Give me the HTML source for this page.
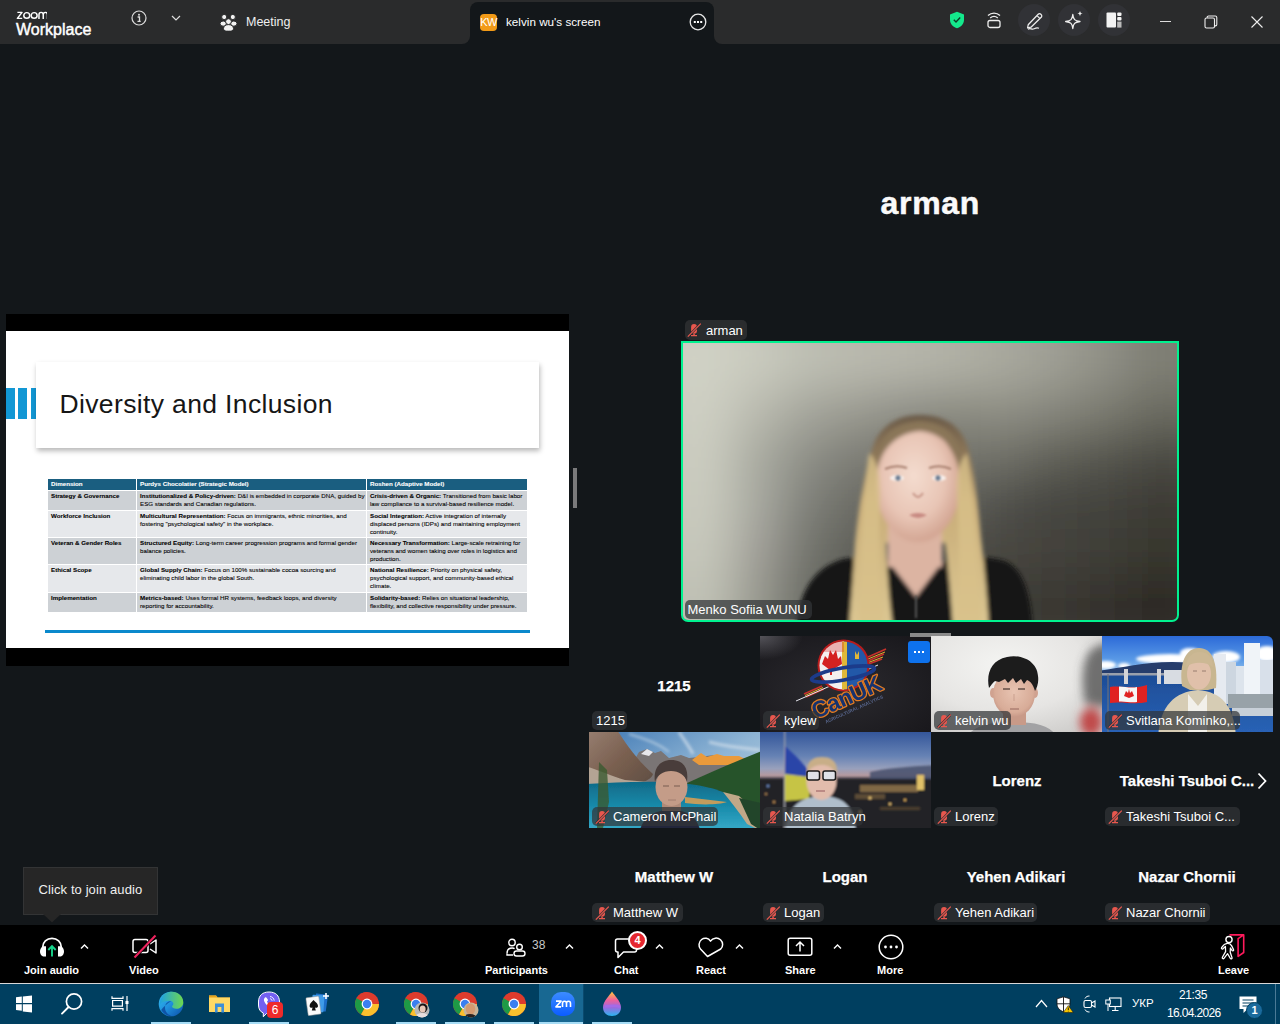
<!DOCTYPE html>
<html><head><meta charset="utf-8">
<style>
*{box-sizing:border-box;margin:0;padding:0}
html,body{width:1280px;height:1024px;overflow:hidden;background:#13171a;font-family:"Liberation Sans",sans-serif;color:#fff}
.a{position:absolute}
#tb{left:0;top:0;width:1280px;height:44px;background:#13171a}
#tbl{left:0;top:0;width:470px;height:44px;background:#2a2b2c;border-bottom-right-radius:8px}
#tbr{left:714px;top:0;width:566px;height:44px;background:#2a2b2c;border-bottom-left-radius:8px}
#tab{left:470px;top:2px;width:244px;height:42px;background:#13171a;border-top-left-radius:8px;border-top-right-radius:8px}
.t{white-space:nowrap;line-height:1}
#toolbar{left:0;top:925px;width:1280px;height:58px;background:#000}
#taskbar{left:0;top:984px;width:1280px;height:40px;background:#003f60}
.tbt{font-size:11px;font-weight:700;color:#fff}
.pill{background:rgba(50,52,56,.72);border-radius:5px;height:19px}
.pt{font-size:13px;color:#fff}
.tile{overflow:hidden}
.nm{font-size:15px;font-weight:700;color:#fff;-webkit-text-stroke:0.25px #fff}
</style></head><body>
<!-- title bar -->
<div class="a" id="tb"></div>
<div class="a" id="tbl"></div>
<div class="a" id="tbr"></div>
<div class="a" style="left:470px;top:0;width:244px;height:12px;background:#2a2b2c"></div>
<div class="a" id="tab"></div>
<!-- logo -->
<svg class="a" style="left:15.5px;top:11.3px" width="31.5" height="8.8" viewBox="0 0 34 10" preserveAspectRatio="none"><g fill="none" stroke="#fff" stroke-width="1.6"><path d="M1.5 1.6h5L1.5 8.4h5.2" stroke-linejoin="round"/><circle cx="11.6" cy="5" r="3.2"/><circle cx="19.6" cy="5" r="3.2"/><path d="M24.8 9V4.2c0-1.6 1-2.6 2.3-2.6s2.3 1 2.3 2.6V9M29.4 4.2c0-1.6 1-2.6 2.3-2.6S34 2.6 34 4.2V9"/></g></svg>
<div class="a t" style="left:16px;top:22px;font-size:16px;font-weight:400;color:#fff;-webkit-text-stroke:0.45px #fff">Workplace</div>
<!-- info -->
<svg class="a" style="left:131px;top:10px" width="16" height="16" viewBox="0 0 16 16"><circle cx="8" cy="8" r="7" fill="none" stroke="#ddd" stroke-width="1.2"/><circle cx="8" cy="4.8" r="1" fill="#ddd"/><path d="M6.6 7h1.9v4.2M6.5 11.3h3.2" stroke="#ddd" stroke-width="1.3" fill="none"/></svg>
<svg class="a" style="left:171px;top:14px" width="10" height="8" viewBox="0 0 10 8"><path d="M1 2l4 4 4-4" stroke="#ddd" stroke-width="1.2" fill="none"/></svg>
<!-- meeting icon -->
<svg class="a" style="left:219.5px;top:13.5px" width="17" height="17" viewBox="0 0 17 17"><g fill="#f2f2f2" stroke="#2a2b2c" stroke-width="1"><circle cx="4.2" cy="3" r="2.6"/><circle cx="12.8" cy="3" r="2.6"/><ellipse cx="3.2" cy="9.6" rx="3.2" ry="2.6"/><ellipse cx="13.8" cy="9.6" rx="3.2" ry="2.6"/><circle cx="8.5" cy="7.6" r="2.9"/><path d="M3.5 14.6c0-2.6 2.2-4 5-4s5 1.4 5 4-2.2 2.6-5 2.6-5 0-5-2.6z"/></g></svg>
<div class="a t" style="left:246px;top:15.7px;font-size:12.5px;color:#f0f0f0">Meeting</div>
<!-- tab content -->
<div class="a" style="left:480px;top:14px;width:17px;height:17px;border-radius:4px;background:#f29a17"></div>
<div class="a t" style="left:480px;top:17px;width:17px;text-align:center;font-size:11px;letter-spacing:-0.5px;color:#fff">KW</div>
<div class="a t" style="left:506px;top:15.5px;font-size:11.7px;color:#fff">kelvin wu's screen</div>
<svg class="a" style="left:689px;top:13.2px" width="18" height="18" viewBox="0 0 18 18"><circle cx="9" cy="9" r="7.8" fill="none" stroke="#e8e8e8" stroke-width="1.3"/><rect x="4.8" y="8" width="2" height="2" fill="#fff"/><rect x="8" y="8" width="2" height="2" fill="#fff"/><rect x="11.2" y="8" width="2" height="2" fill="#fff"/></svg>
<!-- right icons -->
<svg class="a" style="left:949px;top:11px" width="16" height="18" viewBox="0 0 16 18"><path d="M8 0.8L15 3.5v5.2c0 4.2-3.2 7.5-7 8.5C4.2 16.2 1 12.9 1 8.7V3.5z" fill="#14e88c"/><path d="M4.8 8.8l2.2 2.2 4.2-4.4" stroke="#0c3a26" stroke-width="1.4" fill="none"/></svg>
<svg class="a" style="left:986px;top:11px" width="16" height="18" viewBox="0 0 16 18"><path d="M2 4.5C5.5 1.2 10.5 1.2 14 4.5M4.2 7C6.6 4.9 9.4 4.9 11.8 7" stroke="#eee" stroke-width="1.3" fill="none"/><rect x="2" y="9.5" width="12" height="7" rx="2" fill="none" stroke="#eee" stroke-width="1.3"/></svg>
<div class="a" style="left:1018px;top:4px;width:32px;height:32px;border-radius:50%;background:#313236"></div>
<div class="a" style="left:1058px;top:4px;width:32px;height:32px;border-radius:50%;background:#313236"></div>
<div class="a" style="left:1098px;top:4px;width:32px;height:32px;border-radius:50%;background:#313236"></div>
<svg class="a" style="left:1026px;top:11px" width="18" height="19" viewBox="0 0 18 19"><path d="M2.2 13.8L12.2 3.2a1.8 1.8 0 0 1 2.6 0l.4.4a1.8 1.8 0 0 1 0 2.6L5 16.2 1.6 16.8z M11 4.6l2.8 2.8" stroke="#eee" stroke-width="1.25" fill="none" stroke-linejoin="round"/><path d="M2 18.2c2.2-1.8 3.8.8 6-.4s2.8-1.6 5-.6" stroke="#eee" stroke-width="1.15" fill="none"/></svg>
<svg class="a" style="left:1065px;top:10px" width="20" height="20" viewBox="0 0 20 20"><path d="M7.8 4.5C8.4 9.6 9.6 10.8 15 11.5 9.6 12.2 8.4 13.4 7.8 18.5 7.2 13.4 6 12.2.6 11.5 6 10.8 7.2 9.6 7.8 4.5z" fill="none" stroke="#eee" stroke-width="1.3" stroke-linejoin="round"/><path d="M15 .8c.4 2 .8 2.4 2.8 2.8-2 .4-2.4.8-2.8 2.8-.4-2-.8-2.4-2.8-2.8 2-.4 2.4-.8 2.8-2.8z" fill="#eee"/></svg>
<svg class="a" style="left:1106px;top:12px" width="16" height="16" viewBox="0 0 16 16"><rect x="0.5" y="0.5" width="9.5" height="15" rx="1" fill="#f3f3f3"/><rect x="11.2" y="0.5" width="4.3" height="3.5" rx="1" fill="#f3f3f3"/><rect x="11.2" y="5" width="4.3" height="3.5" rx="1" fill="#f3f3f3"/><rect x="11.2" y="9.6" width="4.3" height="6" fill="#bbb"/></svg>
<div class="a" style="left:1160px;top:21px;width:11px;height:1.3px;background:#ddd"></div>
<svg class="a" style="left:1204px;top:15px" width="14" height="14" viewBox="0 0 14 14"><rect x="1" y="3" width="9.5" height="10" rx="1.5" fill="none" stroke="#eee" stroke-width="1.1"/><path d="M3.2 2.8V2.2C3.2 1.5 3.7 1 4.5 1h6.8c.8 0 1.5.6 1.5 1.4v7.2c0 .8-.5 1.3-1.3 1.3h-.5" fill="none" stroke="#eee" stroke-width="1.1"/></svg>
<svg class="a" style="left:1251px;top:16px" width="12" height="12" viewBox="0 0 12 12"><path d="M0.5 0.5l11 11M11.5 0.5l-11 11" stroke="#eee" stroke-width="1.1"/></svg>

<!-- slide -->
<div class="a" style="left:6px;top:314px;width:563px;height:352px;background:#000"></div>
<div class="a" style="left:6px;top:331px;width:563px;height:317px;background:#fff;overflow:hidden">
  <div class="a" style="left:0;top:57px;width:9px;height:31px;background:#1297d4"></div>
  <div class="a" style="left:12px;top:57px;width:9px;height:31px;background:#1297d4"></div>
  <div class="a" style="left:25px;top:57px;width:6px;height:31px;background:#1297d4"></div>
  <div class="a" style="left:30px;top:31px;width:503px;height:86px;background:#fff;box-shadow:1px 3px 5px rgba(0,0,0,.28)"></div>
  <div class="a t" style="left:53.5px;top:59.5px;font-size:26.5px;letter-spacing:0.36px;color:#161616">Diversity and Inclusion</div>
  <div class="a" id="tbl2" style="left:42px;top:148px;width:479px;height:133px;background:#fff">
    <div class="a" style="left:0;top:0;width:479px;height:11px;background:#1a5e80"></div>
    <div class="a" style="left:0;top:12px;width:479px;height:19px;background:#cdd1d5"></div>
    <div class="a" style="left:0;top:32px;width:479px;height:26px;background:#e6e8eb"></div>
    <div class="a" style="left:0;top:59px;width:479px;height:26px;background:#cdd1d5"></div>
    <div class="a" style="left:0;top:86px;width:479px;height:27px;background:#e6e8eb"></div>
    <div class="a" style="left:0;top:114px;width:479px;height:19px;background:#cdd1d5"></div>
    <div class="a" style="left:88px;top:0;width:1px;height:133px;background:#fff"></div>
    <div class="a" style="left:318px;top:0;width:1px;height:133px;background:#fff"></div>
  </div>
  <div class="a" id="ttx" style="left:45px;top:149px;font-size:6.2px;line-height:7.8px;color:#000;-webkit-text-stroke:0.08px #000;white-space:nowrap">
    <div class="a" style="left:0;top:0;color:#fff;font-weight:700;-webkit-text-stroke:0.1px #fff">Dimension</div>
    <div class="a" style="left:89px;top:0;color:#fff;font-weight:700;-webkit-text-stroke:0.1px #fff">Purdys Chocolatier (Strategic Model)</div>
    <div class="a" style="left:319px;top:0;color:#fff;font-weight:700;-webkit-text-stroke:0.1px #fff">Roshen (Adaptive Model)</div>
    <div class="a" style="left:0;top:12px;font-weight:700">Strategy &amp; Governance</div>
    <div class="a" style="left:89px;top:12px"><b>Institutionalized &amp; Policy-driven:</b> D&amp;I is embedded in corporate DNA, guided by<br>ESG standards and Canadian regulations.</div>
    <div class="a" style="left:319px;top:12px"><b>Crisis-driven &amp; Organic:</b> Transitioned from basic labor<br>law compliance to a survival-based resilience model.</div>
    <div class="a" style="left:0;top:32px;font-weight:700">Workforce Inclusion</div>
    <div class="a" style="left:89px;top:32px"><b>Multicultural Representation:</b> Focus on immigrants, ethnic minorities, and<br>fostering "psychological safety" in the workplace.</div>
    <div class="a" style="left:319px;top:32px"><b>Social Integration:</b> Active integration of internally<br>displaced persons (IDPs) and maintaining employment<br>continuity.</div>
    <div class="a" style="left:0;top:59px;font-weight:700">Veteran &amp; Gender Roles</div>
    <div class="a" style="left:89px;top:59px"><b>Structured Equity:</b> Long-term career progression programs and formal gender<br>balance policies.</div>
    <div class="a" style="left:319px;top:59px"><b>Necessary Transformation:</b> Large-scale retraining for<br>veterans and women taking over roles in logistics and<br>production.</div>
    <div class="a" style="left:0;top:86px;font-weight:700">Ethical Scope</div>
    <div class="a" style="left:89px;top:86px"><b>Global Supply Chain:</b> Focus on 100% sustainable cocoa sourcing and<br>eliminating child labor in the global South.</div>
    <div class="a" style="left:319px;top:86px"><b>National Resilience:</b> Priority on physical safety,<br>psychological support, and community-based ethical<br>climate.</div>
    <div class="a" style="left:0;top:114px;font-weight:700">Implementation</div>
    <div class="a" style="left:89px;top:114px"><b>Metrics-based:</b> Uses formal HR systems, feedback loops, and diversity<br>reporting for accountability.</div>
    <div class="a" style="left:319px;top:114px"><b>Solidarity-based:</b> Relies on situational leadership,<br>flexibility, and collective responsibility under pressure.</div>
  </div>
  <div class="a" style="left:39px;top:299px;width:485px;height:3px;background:#0a89cc"></div>
</div>
<!-- divider handle -->
<div class="a" style="left:573px;top:468px;width:4px;height:40px;background:#7a7a7b"></div>

<!-- speaker -->
<div class="a t" style="left:880.5px;top:186.8px;font-size:32px;font-weight:700;letter-spacing:0.7px;color:#fafafa;-webkit-text-stroke:0.5px #fafafa">arman</div>
<div class="a pill" style="left:685px;top:320px;width:62px;height:20px;border-radius:5px;background:#2a2c2e"></div>
<svg class="a" style="left:687px;top:323px" width="14" height="14" viewBox="0 0 14 14"><g fill="#e8574e"><rect x="4.1" y="1" width="5.9" height="9.6" rx="2.95"/><path d="M6.3 10.6h1.5v1.4H10v1.3H4v-1.3h2.3z"/></g><path d="M.8 13.6L13.8 .6" stroke="#2a2b2d" stroke-width="2.4"/><path d="M.8 13.6L13.8 .6" stroke="#e8574e" stroke-width="1.2"/></svg>
<div class="a t pt" style="left:706px;top:324px">arman</div>

<div class="a" id="vid" style="left:681px;top:341px;width:498px;height:281px;border:2px solid #00f28f;border-radius:0 0 7px 7px;overflow:hidden;background:#777">
<svg width="494" height="277" viewBox="0 0 494 277" style="display:block">
<defs>
 <filter id="mvG" x="-20%" y="-20%" width="140%" height="140%"><feGaussianBlur stdDeviation="22"/></filter>
 <filter id="mv30" x="-50%" y="-50%" width="200%" height="200%"><feGaussianBlur stdDeviation="30"/></filter>
 <filter id="mv15" x="-50%" y="-50%" width="200%" height="200%"><feGaussianBlur stdDeviation="14"/></filter>
 <filter id="mv3" x="-20%" y="-20%" width="140%" height="140%"><feGaussianBlur stdDeviation="2.2"/></filter>
 <filter id="mv1"><feGaussianBlur stdDeviation="1"/></filter>
 <linearGradient id="mvV" x1="0" y1="0" x2="0" y2="1"><stop offset="0" stop-color="#9e9e94"/><stop offset=".3" stop-color="#6e6e66"/><stop offset=".48" stop-color="#3c3b36"/><stop offset=".7" stop-color="#46453e"/><stop offset="1" stop-color="#2c2a25"/></linearGradient>
 <radialGradient id="mvC" gradientUnits="userSpaceOnUse" cx="235" cy="150" r="120"><stop offset="0" stop-color="#6e6e68" stop-opacity=".95"/><stop offset=".6" stop-color="#6e6e68" stop-opacity=".7"/><stop offset="1" stop-color="#6e6e68" stop-opacity="0"/></radialGradient>
 <radialGradient id="mvT" gradientUnits="userSpaceOnUse" cx="210" cy="-30" r="300" gradientTransform="translate(210 -30) scale(1 .45) translate(-210 30)"><stop offset="0" stop-color="#c8c9be" stop-opacity="1"/><stop offset=".5" stop-color="#babbb0" stop-opacity=".75"/><stop offset="1" stop-color="#b5b6ab" stop-opacity="0"/></radialGradient>
 <linearGradient id="mvL2" x1="0" y1="0" x2="1" y2="0"><stop offset="0" stop-color="#d5d6ca"/><stop offset=".08" stop-color="#cfd0c4"/><stop offset=".18" stop-color="#acada3" stop-opacity=".95"/><stop offset=".3" stop-color="#8a8b84" stop-opacity=".75"/><stop offset=".42" stop-color="#77776f" stop-opacity="0"/></linearGradient>
 <linearGradient id="mvL" x1="0" y1="0" x2="1" y2="0"><stop offset="0" stop-color="#d2d3c7"/><stop offset=".35" stop-color="#c4c5b9"/><stop offset="1" stop-color="#c4c5b9" stop-opacity="0"/></linearGradient>
 <linearGradient id="mvH" x1="0" y1="0" x2="0" y2="1"><stop offset="0" stop-color="#6a5a48"/><stop offset=".18" stop-color="#8c7658"/><stop offset=".4" stop-color="#c8ac78"/><stop offset="1" stop-color="#dcc792"/></linearGradient>
 <radialGradient id="mvS" cx=".45" cy=".42" r=".62"><stop offset="0" stop-color="#f4dccf"/><stop offset=".6" stop-color="#e8c5b5"/><stop offset="1" stop-color="#cf9f8c"/></radialGradient>
</defs>
<g filter="url(#mvG)"><rect x="-40.0" y="-40.0" width="89.9" height="86.7" fill="#d0d1c5"/><rect x="49.4" y="-40.0" width="49.9" height="86.7" fill="#c9cabe"/><rect x="98.8" y="-40.0" width="49.9" height="86.7" fill="#bebfb4"/><rect x="148.2" y="-40.0" width="49.9" height="86.7" fill="#b9b9ae"/><rect x="197.6" y="-40.0" width="49.9" height="86.7" fill="#b6b6ab"/><rect x="247.0" y="-40.0" width="49.9" height="86.7" fill="#b1b1a6"/><rect x="296.4" y="-40.0" width="49.9" height="86.7" fill="#a9a99e"/><rect x="345.8" y="-40.0" width="49.9" height="86.7" fill="#9f9f94"/><rect x="395.2" y="-40.0" width="49.9" height="86.7" fill="#919187"/><rect x="444.6" y="-40.0" width="89.9" height="86.7" fill="#7f7f75"/><rect x="-40.0" y="46.2" width="89.9" height="46.7" fill="#cecfc3"/><rect x="49.4" y="46.2" width="49.9" height="46.7" fill="#b9baaf"/><rect x="98.8" y="46.2" width="49.9" height="46.7" fill="#a4a59b"/><rect x="148.2" y="46.2" width="49.9" height="46.7" fill="#9a9a90"/><rect x="197.6" y="46.2" width="49.9" height="46.7" fill="#8e8e86"/><rect x="247.0" y="46.2" width="49.9" height="46.7" fill="#8a8a80"/><rect x="296.4" y="46.2" width="49.9" height="46.7" fill="#8d8d83"/><rect x="345.8" y="46.2" width="49.9" height="46.7" fill="#85857b"/><rect x="395.2" y="46.2" width="49.9" height="46.7" fill="#7a7a70"/><rect x="444.6" y="46.2" width="89.9" height="46.7" fill="#6a6a60"/><rect x="-40.0" y="92.3" width="89.9" height="46.7" fill="#cbccc0"/><rect x="49.4" y="92.3" width="49.9" height="46.7" fill="#a9aaa0"/><rect x="98.8" y="92.3" width="49.9" height="46.7" fill="#8d8e86"/><rect x="148.2" y="92.3" width="49.9" height="46.7" fill="#7c7c74"/><rect x="197.6" y="92.3" width="49.9" height="46.7" fill="#74746c"/><rect x="247.0" y="92.3" width="49.9" height="46.7" fill="#72726a"/><rect x="296.4" y="92.3" width="49.9" height="46.7" fill="#6e6e66"/><rect x="345.8" y="92.3" width="49.9" height="46.7" fill="#5e5e56"/><rect x="395.2" y="92.3" width="49.9" height="46.7" fill="#55554d"/><rect x="444.6" y="92.3" width="89.9" height="46.7" fill="#4a4a42"/><rect x="-40.0" y="138.5" width="89.9" height="46.7" fill="#c9cabe"/><rect x="49.4" y="138.5" width="49.9" height="46.7" fill="#a8a9a0"/><rect x="98.8" y="138.5" width="49.9" height="46.7" fill="#7f8079"/><rect x="148.2" y="138.5" width="49.9" height="46.7" fill="#6a6a64"/><rect x="197.6" y="138.5" width="49.9" height="46.7" fill="#66665f"/><rect x="247.0" y="138.5" width="49.9" height="46.7" fill="#62625b"/><rect x="296.4" y="138.5" width="49.9" height="46.7" fill="#4e4e48"/><rect x="345.8" y="138.5" width="49.9" height="46.7" fill="#45453f"/><rect x="395.2" y="138.5" width="49.9" height="46.7" fill="#42423c"/><rect x="444.6" y="138.5" width="89.9" height="46.7" fill="#3c3b35"/><rect x="-40.0" y="184.7" width="89.9" height="46.7" fill="#c6c7bb"/><rect x="49.4" y="184.7" width="49.9" height="46.7" fill="#a09f98"/><rect x="98.8" y="184.7" width="49.9" height="46.7" fill="#73746d"/><rect x="148.2" y="184.7" width="49.9" height="46.7" fill="#5e5e58"/><rect x="197.6" y="184.7" width="49.9" height="46.7" fill="#555550"/><rect x="247.0" y="184.7" width="49.9" height="46.7" fill="#50504a"/><rect x="296.4" y="184.7" width="49.9" height="46.7" fill="#484741"/><rect x="345.8" y="184.7" width="49.9" height="46.7" fill="#44433d"/><rect x="395.2" y="184.7" width="49.9" height="46.7" fill="#403f39"/><rect x="444.6" y="184.7" width="89.9" height="46.7" fill="#38372f"/><rect x="-40.0" y="230.8" width="89.9" height="86.7" fill="#c0c1b5"/><rect x="49.4" y="230.8" width="49.9" height="86.7" fill="#98998f"/><rect x="98.8" y="230.8" width="49.9" height="86.7" fill="#6b6c65"/><rect x="148.2" y="230.8" width="49.9" height="86.7" fill="#55554f"/><rect x="197.6" y="230.8" width="49.9" height="86.7" fill="#4a4a45"/><rect x="247.0" y="230.8" width="49.9" height="86.7" fill="#45443f"/><rect x="296.4" y="230.8" width="49.9" height="86.7" fill="#3e3d37"/><rect x="345.8" y="230.8" width="49.9" height="86.7" fill="#3a3933"/><rect x="395.2" y="230.8" width="49.9" height="86.7" fill="#35332d"/><rect x="444.6" y="230.8" width="89.9" height="86.7" fill="#2e2c26"/></g>
<g filter="url(#mv3)">
 <path d="M113 290C115 250 130 225 160 216 180 212 200 214 215 220L258 220C275 213 300 212 322 218 340 226 348 250 350 290z" fill="#161615"/>
 <path d="M237 72C215 72 200 82 192 98 182 125 176 160 172 200 170 235 168 260 166 285L210 285C206 255 204 225 203 200L262 200C266 230 268 258 270 285L306 285C304 255 302 225 298 195 294 150 290 115 282 97 274 80 258 72 237 72z" fill="url(#mvH)"/>
 <rect x="205" y="180" width="54" height="44" fill="#dcb4a2"/>
 <path d="M205 218L233 254 260 218z" fill="#dcb4a2"/>
 <ellipse cx="235" cy="142" rx="42" ry="57" fill="url(#mvS)"/>
 <path d="M193 128C192 98 205 80 237 78 268 80 280 98 279 128 272 103 258 90 237 88 215 90 200 103 193 128z" fill="#8a7658"/>
 <path d="M186 110C180 150 178 200 176 280L200 280C196 240 195 200 197 160 198 135 195 118 186 110z" fill="#d8c08a" opacity=".8"/>
 <path d="M284 110C290 150 294 200 298 280L274 280C276 240 277 200 274 160 272 135 276 118 284 110z" fill="#d8c08a" opacity=".8"/>
</g>
<g filter="url(#mv1)">
 <ellipse cx="214" cy="135" rx="7" ry="3" fill="#f8f0ec"/>
 <ellipse cx="256" cy="135" rx="7" ry="3" fill="#f8f0ec"/>
 <circle cx="215" cy="135" r="2.8" fill="#6a7e94"/>
 <circle cx="255" cy="135" r="2.8" fill="#6a7e94"/>
 <path d="M202 126q11-5 22-1M246 125q11-4 22 1" stroke="#a88070" stroke-width="2" fill="none"/>
 <path d="M230 150q5 8 10 0" stroke="#c8988a" stroke-width="2" fill="none"/>
 <path d="M226 172q9-4 18 0q-9 6-18 0z" fill="#c88a82"/>
 <path d="M233 253v22" stroke="#555" stroke-width="2"/>
</g>
</svg>
<div class="a pill" style="left:2px;top:256.5px;width:127px;height:19.5px;border-radius:5px"></div>
<div class="a t pt" style="left:4.5px;top:260px;">Menko Sofiia WUNU</div>
</div>

<!-- grid -->
<div class="a t nm" style="left:574px;top:677.5px;width:200px;text-align:center">1215</div>
<div class="a pill" style="left:592px;top:711px;width:35px;height:19px"></div><div class="a t pt" style="left:596px;top:714px">1215</div>
<div class="a tile" style="left:760px;top:636px;width:171px;height:96px;"><svg width="171" height="96" viewBox="0 0 171 96" style="display:block">
<defs>
<radialGradient id="ky_bg" cx=".45" cy=".55" r=".7"><stop offset="0" stop-color="#2c2b30"/><stop offset="1" stop-color="#19181c"/></radialGradient>
<radialGradient id="ky_tl" cx="0" cy="0" r=".25"><stop offset="0" stop-color="#55545a"/><stop offset="1" stop-color="#55545a" stop-opacity="0"/></radialGradient>
<clipPath id="ky_c"><circle cx="83.5" cy="29.5" r="24"/></clipPath>
<filter id="ky_b"><feGaussianBlur stdDeviation=".5"/></filter>
</defs>
<rect width="171" height="96" fill="url(#ky_bg)"/>
<rect width="171" height="96" fill="url(#ky_tl)"/>
<g filter="url(#ky_b)">
<path d="M108 21L126 13M108 25L124 18M106 29L122 23" stroke="#c8302a" stroke-width="1.6"/>
<path d="M108 23L125 16M107 27L123 21" stroke="#e0b030" stroke-width="1"/>
<path d="M44 58L62 50M46 61L64 53" stroke="#c8302a" stroke-width="1.6"/>
<path d="M45 59.5L63 51.5" stroke="#e0b030" stroke-width="1"/>
<path d="M36 65L118 29" stroke="#e8e8f0" stroke-width="1"/>
<circle cx="83.5" cy="29.5" r="26" fill="#b81c1c"/>
<g clip-path="url(#ky_c)">
<rect x="58" y="4" width="26" height="52" fill="#f4f0f0"/>
<rect x="84" y="4" width="26" height="52" fill="#2058a8"/>
<rect x="82" y="4" width="5" height="52" fill="#e0b838"/>
<path d="M62 28l3-8 3 3 2-9 3 5 3-5 2 9 3-3 1 8-10 6v5h-2v-5z" fill="#d42020"/>
<path d="M60 6h24v10H60z" fill="#d42020" opacity=".3"/>
<path d="M95 15l2 4 2-4v8h-4z" fill="#e0b838"/>
</g>
<ellipse cx="83" cy="38" rx="32" ry="6" transform="rotate(-10 83 38)" fill="none" stroke="#1a3a8a" stroke-width="3.6"/>
<g transform="rotate(-24 86 60)">
<text x="86" y="69" text-anchor="middle" font-family="Liberation Sans" font-weight="700" font-size="23" letter-spacing="-0.5" fill="#14336e" stroke="#e07a22" stroke-width="2.6" stroke-linejoin="round" paint-order="stroke">CanUK</text>
<text x="88" y="77" text-anchor="middle" font-family="Liberation Sans" font-weight="700" font-size="4.6" fill="#56648a">AGRICULTURAL ANALYTICS</text>
</g>
</g>
</svg>
</div>
<div class="a" style="left:910px;top:633px;width:41px;height:4px;background:#8a8a8a"></div>
<div class="a" style="left:908px;top:641px;width:22px;height:22px;border-radius:3px;background:#0e72ed"></div>
<svg class="a" style="left:908px;top:641px" width="22" height="22"><rect x="6" y="10" width="2" height="2" fill="#fff"/><rect x="10" y="10" width="2" height="2" fill="#fff"/><rect x="14" y="10" width="2" height="2" fill="#fff"/></svg>
<div class="a pill" style="left:763px;top:711px;width:56px;height:19px"></div><svg class="a" style="left:766px;top:713.5px" width="14" height="14" viewBox="0 0 14 14"><g fill="#e8574e"><rect x="4.1" y="1" width="5.9" height="9.6" rx="2.95"/><path d="M6.3 10.6h1.5v1.4H10v1.3H4v-1.3h2.3z"/></g><path d="M.8 13.6L13.8 .6" stroke="#2e3034" stroke-width="2.4"/><path d="M.8 13.6L13.8 .6" stroke="#e8574e" stroke-width="1.2"/></svg><div class="a t pt" style="left:784px;top:714px">kylew</div>
<div class="a tile" style="left:931px;top:636px;width:171px;height:96px;"><svg width="171" height="96" viewBox="0 0 171 96" style="display:block">
<defs>
<radialGradient id="ke_bg" cx=".42" cy=".3" r=".8"><stop offset="0" stop-color="#f4f4f2"/><stop offset=".6" stop-color="#e6e5e3"/><stop offset="1" stop-color="#cfcecc"/></radialGradient>
<radialGradient id="ke_face" cx=".5" cy=".45" r=".6"><stop offset="0" stop-color="#e8c4b2"/><stop offset=".75" stop-color="#d8ac98"/><stop offset="1" stop-color="#c09080"/></radialGradient>
<filter id="ke_b" x="-10%" y="-10%" width="120%" height="120%"><feGaussianBlur stdDeviation=".7"/></filter>
<filter id="ke_b6" x="-50%" y="-50%" width="200%" height="200%"><feGaussianBlur stdDeviation="5"/></filter>
</defs>
<rect width="171" height="96" fill="url(#ke_bg)"/>
<g filter="url(#ke_b6)">
<path d="M162 12C150 22 150 45 154 68L180 72V5z" fill="#4a4a4a" opacity=".75"/>
<ellipse cx="160" cy="86" rx="11" ry="14" fill="#c04848"/>
</g>
<g filter="url(#ke_b)">
<path d="M36 101C42 90 58 86 82 86S120 90 126 101z" fill="#a2a2a4"/>
<rect x="72" y="66" width="23" height="23" fill="#c89a88"/>
<ellipse cx="62" cy="57" rx="3" ry="5" fill="#d0a290"/>
<ellipse cx="104" cy="57" rx="3" ry="5" fill="#d0a290"/>
<ellipse cx="83" cy="58" rx="21" ry="23" fill="url(#ke_face)"/>
<path d="M58 52C55 38 60 24 76 21 92 18 106 26 107 40 108 46 106 52 104 55 102 48 99 45 96 44L93 48 90 43 85 47 82 42 77 47 74 43 68 46 64 45C61 47 60 50 58 52z" fill="#1c1b1e"/>
</g>
<path d="M72 53h7M87 53h7" stroke="#3a2a25" stroke-width="1.4" opacity=".75"/>
<path d="M79 73h9" stroke="#9a6a60" stroke-width="1.3" opacity=".8"/>
<path d="M83 58v7" stroke="#c09484" stroke-width="1.2" opacity=".6"/>
</svg>
</div>
<div class="a pill" style="left:934px;top:711px;width:77px;height:19px"></div><svg class="a" style="left:937px;top:713.5px" width="14" height="14" viewBox="0 0 14 14"><g fill="#e8574e"><rect x="4.1" y="1" width="5.9" height="9.6" rx="2.95"/><path d="M6.3 10.6h1.5v1.4H10v1.3H4v-1.3h2.3z"/></g><path d="M.8 13.6L13.8 .6" stroke="#2e3034" stroke-width="2.4"/><path d="M.8 13.6L13.8 .6" stroke="#e8574e" stroke-width="1.2"/></svg><div class="a t pt" style="left:955px;top:714px">kelvin wu</div>
<div class="a tile" style="left:1102px;top:636px;width:171px;height:96px;border-top-right-radius:6px"><svg width="171" height="96" viewBox="0 0 171 96" style="display:block">
<defs>
<linearGradient id="sv_sky" x1="0" y1="0" x2="0" y2="1"><stop offset="0" stop-color="#2c6ad8"/><stop offset=".25" stop-color="#5a9ae6"/><stop offset=".4" stop-color="#9cc6ee"/></linearGradient>
<linearGradient id="sv_w" x1="0" y1="0" x2="0" y2="1"><stop offset="0" stop-color="#1d4c96"/><stop offset="1" stop-color="#2a64b8"/></linearGradient>
<filter id="sv_b" x="-10%" y="-10%" width="120%" height="120%"><feGaussianBlur stdDeviation=".7"/></filter>
<filter id="sv_b2" x="-30%" y="-50%" width="160%" height="200%"><feGaussianBlur stdDeviation="1.6"/></filter>
</defs>
<rect width="171" height="96" fill="url(#sv_sky)"/>
<g filter="url(#sv_b2)">
<ellipse cx="68" cy="23" rx="34" ry="5" fill="#fff"/>
<ellipse cx="88" cy="17" rx="10" ry="5" fill="#fff"/>
<ellipse cx="124" cy="21" rx="14" ry="6" fill="#fff"/>
<ellipse cx="165" cy="18" rx="12" ry="8" fill="#fff"/>
<ellipse cx="4" cy="29" rx="10" ry="4" fill="#fff"/>
<ellipse cx="22" cy="30" rx="6" ry="3" fill="#fff"/>
</g>
<g filter="url(#sv_b)">
<path d="M-5 35C20 32 40 26 70 26 95 26 110 30 125 35V40H-5z" fill="#253c6c"/>
<rect x="-5" y="38" width="181" height="63" fill="url(#sv_w)"/>
<rect x="-5" y="37" width="100" height="2.5" fill="#9aa0ac"/>
<rect x="22" y="33" width="4" height="15" fill="#d4d4d8"/>
<rect x="55" y="33" width="4" height="15" fill="#d4d4d8"/>
<rect x="62" y="34" width="18" height="14" fill="#d8dce2"/>
<rect x="112" y="18" width="12" height="50" fill="#e6eaf0"/>
<rect x="124" y="26" width="10" height="42" fill="#cdd6e0"/>
<rect x="134" y="30" width="8" height="38" fill="#dde4ec"/>
<rect x="142" y="7" width="16" height="61" fill="#f0f4f8"/>
<rect x="158" y="24" width="18" height="44" fill="#d8e0ea"/>
<rect x="126" y="58" width="50" height="14" fill="#98a2a8"/>
<rect x="130" y="72" width="46" height="8" fill="#c8d0d8"/>
<path d="M6 38v63" stroke="#777" stroke-width="1"/>
<path d="M8 51c12-2 24 3 37-2v17c-12 3-25-1-37 1z" fill="#e02424"/>
<path d="M17 50.5c6 0 12 2 18 .5v15c-6 1-12-1-18-.5z" fill="#f6f6f6"/>
<path d="M22 60l2-5 2 2 1-4 1 4 2-2 2 5-5 2z" fill="#e02424"/>
<path d="M56 101C58 70 72 56 96 54 120 56 132 70 134 101z" fill="#d6ccb4"/>
<path d="M86 58l10 12 9-12v43H86z" fill="#f2f0ea"/>
<path d="M80 50C77 26 84 12 97 12 110 12 116 26 114 52L106 54H88z" fill="#c8b690"/>
<ellipse cx="97" cy="38" rx="12" ry="15.5" fill="#e0c0aa"/>
<path d="M84 31C85 20 91 16 98 16 106 16 111 22 111 31 104 26 92 25 84 31z" fill="#ccb894"/>
</g>
<path d="M91 35h4M100 35h4" stroke="#6a5048" stroke-width="1" opacity=".6"/>
</svg>
</div>
<div class="a pill" style="left:1105px;top:711px;width:135px;height:19px"></div><svg class="a" style="left:1108px;top:713.5px" width="14" height="14" viewBox="0 0 14 14"><g fill="#e8574e"><rect x="4.1" y="1" width="5.9" height="9.6" rx="2.95"/><path d="M6.3 10.6h1.5v1.4H10v1.3H4v-1.3h2.3z"/></g><path d="M.8 13.6L13.8 .6" stroke="#2e3034" stroke-width="2.4"/><path d="M.8 13.6L13.8 .6" stroke="#e8574e" stroke-width="1.2"/></svg><div class="a t pt" style="left:1126px;top:714px">Svitlana Kominko,...</div>
<div class="a tile" style="left:589px;top:732px;width:171px;height:96px;"><svg width="171" height="96" viewBox="0 0 171 96" style="display:block">
<defs>
<linearGradient id="ca_sky" x1="0" y1="0" x2="1" y2="1"><stop offset="0" stop-color="#3f78b4"/><stop offset=".5" stop-color="#8eb4d4"/><stop offset="1" stop-color="#c8d8e2"/></linearGradient>
<linearGradient id="ca_lake" x1="0" y1="0" x2="0" y2="1"><stop offset="0" stop-color="#0f6a88"/><stop offset=".5" stop-color="#1a8cac"/><stop offset="1" stop-color="#3aaecc"/></linearGradient>
<linearGradient id="ca_rock" x1="0" y1="0" x2="1" y2="1"><stop offset="0" stop-color="#9a8274"/><stop offset=".5" stop-color="#7a6050"/><stop offset="1" stop-color="#5a4a40"/></linearGradient>
<filter id="ca_b" x="-10%" y="-10%" width="120%" height="120%"><feGaussianBlur stdDeviation=".7"/></filter>
<filter id="ca_b2" x="-20%" y="-50%" width="140%" height="200%"><feGaussianBlur stdDeviation="1.5"/></filter>
</defs>
<rect width="171" height="96" fill="url(#ca_sky)"/>
<g filter="url(#ca_b2)" opacity=".6">
<path d="M90 0C95 8 100 14 104 22" stroke="#e8eef4" stroke-width="3" fill="none"/>
<path d="M120 10C135 14 150 16 171 18" stroke="#e0e8f0" stroke-width="3" fill="none"/>
<path d="M40 2C60 8 70 12 80 20" stroke="#d8e4ee" stroke-width="2" fill="none"/>
</g>
<g filter="url(#ca_b)">
<path d="M42 34L50 20 58 17 66 21 72 19 80 26 92 23 100 26 110 25 125 23 140 25 160 27 180 31V55H42z" fill="#7a7474"/>
<path d="M52 22L58 17 64 20 60 24z" fill="#e8e8ec"/>
<path d="M103 28L112 21 118 25 128 22 135 24 150 24 158 28 150 33 110 33z" fill="#ea9a3a"/>
<path d="M-5 -5H26C36 10 46 26 64 42 62 50 40 58 -5 62z" fill="url(#ca_rock)"/>
<path d="M-5 34C8 37 22 44 36 48L60 50 40 60 -5 62z" fill="#b4a494"/>
<path d="M180 16C150 28 122 40 96 52L180 85z" fill="#28522a"/>
<path d="M-5 52C30 50 70 48 100 52 130 56 140 62 150 70L176 101H-5z" fill="url(#ca_lake)"/>
<path d="M96 65C110 67 124 68 138 70 130 73 110 73 96 71z" fill="#e0a050" opacity=".85"/>
<path d="M134 60L150 64 176 86V101L158 92C150 80 142 70 134 60z" fill="#c0a888"/>
<path d="M150 66L176 72V101L162 92z" fill="#23452a"/>
<path d="M10 30L18 38 20 70 14 96 8 96z" fill="#3a5a30" opacity=".8"/>
<path d="M50 101C54 84 66 78 82 78 98 78 108 84 112 101z" fill="#23263a"/>
<rect x="73" y="64" width="19" height="15" fill="#b08a78"/>
<ellipse cx="82.5" cy="55" rx="16" ry="19" fill="#c49c88"/>
<path d="M66 50C64 35 72 28 82 28 94 28 100 35 98 50 96 43 90 39 82 39 74 39 68 43 66 50z" fill="#4a3e3a"/>
</g>
<path d="M74 54h6M85 54h6" stroke="#3a2a25" stroke-width="1.2" opacity=".55"/>
<path d="M79 68h8" stroke="#8a6a60" stroke-width="1" opacity=".6"/>
</svg>
</div>
<div class="a pill" style="left:592px;top:807px;width:126px;height:19px"></div><svg class="a" style="left:595px;top:809.5px" width="14" height="14" viewBox="0 0 14 14"><g fill="#e8574e"><rect x="4.1" y="1" width="5.9" height="9.6" rx="2.95"/><path d="M6.3 10.6h1.5v1.4H10v1.3H4v-1.3h2.3z"/></g><path d="M.8 13.6L13.8 .6" stroke="#2e3034" stroke-width="2.4"/><path d="M.8 13.6L13.8 .6" stroke="#e8574e" stroke-width="1.2"/></svg><div class="a t pt" style="left:613px;top:810px">Cameron McPhail</div>
<div class="a tile" style="left:760px;top:732px;width:171px;height:96px;"><svg width="171" height="96" viewBox="0 0 171 96" style="display:block">
<defs>
<linearGradient id="na_sky" x1="0" y1="0" x2="0" y2="1"><stop offset="0" stop-color="#34569a"/><stop offset=".25" stop-color="#6682b4"/><stop offset=".38" stop-color="#98a0bc"/><stop offset=".45" stop-color="#b49aa0"/><stop offset=".49" stop-color="#5a5058"/><stop offset=".52" stop-color="#2a282e"/></linearGradient>
<filter id="na_b" x="-10%" y="-10%" width="120%" height="120%"><feGaussianBlur stdDeviation=".8"/></filter>
</defs>
<rect width="171" height="96" fill="url(#na_sky)"/>
<g filter="url(#na_b)">
<path d="M110 40C128 36 150 34 180 33V47H110z" fill="#46506c" opacity=".85"/>
<path d="M-5 47h185v54H-5z" fill="#222127"/>
<rect x="100" y="53" width="58" height="7" fill="#8a7048" opacity=".9"/>
<rect x="157" y="43" width="7" height="15" fill="#e0c068"/>
<path d="M95 62h30v5H95z" fill="#6a5838" opacity=".8"/>
<path d="M120 75h40v3h-40z" fill="#5a4a30" opacity=".7"/>
<circle cx="110" cy="66" r="1.6" fill="#f0c878"/>
<circle cx="130" cy="72" r="1.3" fill="#f0c878"/>
<circle cx="145" cy="68" r="1.2" fill="#e8b860"/>
<circle cx="100" cy="80" r="1.2" fill="#e8b860"/>
<circle cx="8" cy="54" r="1.3" fill="#7090c8"/>
<circle cx="14" cy="70" r="1.2" fill="#c09050"/>
<circle cx="6" cy="62" r="1" fill="#d0a060"/>
<rect x="24" y="-5" width="1.3" height="106" fill="#a0a0a8"/>
<path d="M25 14C33 21 42 30 49 39V46L25 43z" fill="#2a45a8"/>
<path d="M25 42L49 45C51 52 50 60 49 67 41 68 32 68 25 69z" fill="#c6c444"/>
<path d="M25 101C27 74 40 65 62 64 84 65 94 73 96 101z" fill="#b0bfcc"/>
<ellipse cx="61.5" cy="49" rx="15" ry="19" fill="#e2bcac"/>
<path d="M47 42C46 30 52 25 62 25 72 25 78 30 77 42 73 35 67 33 62 33 56 33 50 35 47 42z" fill="#c8ae88"/>
</g>
<rect x="47" y="39" width="12.5" height="9" rx="2" fill="#dfe2e8" stroke="#1a1a1a" stroke-width="1.5"/>
<rect x="63" y="39" width="12.5" height="9" rx="2" fill="#dfe2e8" stroke="#1a1a1a" stroke-width="1.5"/>
<path d="M56 59h9" stroke="#a87070" stroke-width="1.3"/>
</svg>
</div>
<div class="a pill" style="left:763px;top:807px;width:100px;height:19px"></div><svg class="a" style="left:766px;top:809.5px" width="14" height="14" viewBox="0 0 14 14"><g fill="#e8574e"><rect x="4.1" y="1" width="5.9" height="9.6" rx="2.95"/><path d="M6.3 10.6h1.5v1.4H10v1.3H4v-1.3h2.3z"/></g><path d="M.8 13.6L13.8 .6" stroke="#2e3034" stroke-width="2.4"/><path d="M.8 13.6L13.8 .6" stroke="#e8574e" stroke-width="1.2"/></svg><div class="a t pt" style="left:784px;top:810px">Natalia Batryn</div>
<div class="a t nm" style="left:917px;top:772.5px;width:200px;text-align:center">Lorenz</div>
<div class="a pill" style="left:934px;top:807px;width:64px;height:19px"></div><svg class="a" style="left:937px;top:809.5px" width="14" height="14" viewBox="0 0 14 14"><g fill="#e8574e"><rect x="4.1" y="1" width="5.9" height="9.6" rx="2.95"/><path d="M6.3 10.6h1.5v1.4H10v1.3H4v-1.3h2.3z"/></g><path d="M.8 13.6L13.8 .6" stroke="#2e3034" stroke-width="2.4"/><path d="M.8 13.6L13.8 .6" stroke="#e8574e" stroke-width="1.2"/></svg><div class="a t pt" style="left:955px;top:810px">Lorenz</div>
<div class="a t nm" style="left:1087px;top:772.5px;width:200px;text-align:center">Takeshi Tsuboi C...</div>
<svg class="a" style="left:1257px;top:772px" width="10" height="18" viewBox="0 0 10 18"><path d="M1.5 1.5L8.5 9 1.5 16.5" stroke="#fff" stroke-width="1.8" fill="none"/></svg>
<div class="a pill" style="left:1105px;top:807px;width:135px;height:19px"></div><svg class="a" style="left:1108px;top:809.5px" width="14" height="14" viewBox="0 0 14 14"><g fill="#e8574e"><rect x="4.1" y="1" width="5.9" height="9.6" rx="2.95"/><path d="M6.3 10.6h1.5v1.4H10v1.3H4v-1.3h2.3z"/></g><path d="M.8 13.6L13.8 .6" stroke="#2e3034" stroke-width="2.4"/><path d="M.8 13.6L13.8 .6" stroke="#e8574e" stroke-width="1.2"/></svg><div class="a t pt" style="left:1126px;top:810px">Takeshi Tsuboi C...</div>
<div class="a t nm" style="left:574px;top:868.5px;width:200px;text-align:center">Matthew W</div>
<div class="a pill" style="left:592px;top:903px;width:91px;height:19px"></div><svg class="a" style="left:595px;top:905.5px" width="14" height="14" viewBox="0 0 14 14"><g fill="#e8574e"><rect x="4.1" y="1" width="5.9" height="9.6" rx="2.95"/><path d="M6.3 10.6h1.5v1.4H10v1.3H4v-1.3h2.3z"/></g><path d="M.8 13.6L13.8 .6" stroke="#2e3034" stroke-width="2.4"/><path d="M.8 13.6L13.8 .6" stroke="#e8574e" stroke-width="1.2"/></svg><div class="a t pt" style="left:613px;top:906px">Matthew W</div>
<div class="a t nm" style="left:745px;top:868.5px;width:200px;text-align:center">Logan</div>
<div class="a pill" style="left:763px;top:903px;width:61px;height:19px"></div><svg class="a" style="left:766px;top:905.5px" width="14" height="14" viewBox="0 0 14 14"><g fill="#e8574e"><rect x="4.1" y="1" width="5.9" height="9.6" rx="2.95"/><path d="M6.3 10.6h1.5v1.4H10v1.3H4v-1.3h2.3z"/></g><path d="M.8 13.6L13.8 .6" stroke="#2e3034" stroke-width="2.4"/><path d="M.8 13.6L13.8 .6" stroke="#e8574e" stroke-width="1.2"/></svg><div class="a t pt" style="left:784px;top:906px">Logan</div>
<div class="a t nm" style="left:916px;top:868.5px;width:200px;text-align:center">Yehen Adikari</div>
<div class="a pill" style="left:934px;top:903px;width:103px;height:19px"></div><svg class="a" style="left:937px;top:905.5px" width="14" height="14" viewBox="0 0 14 14"><g fill="#e8574e"><rect x="4.1" y="1" width="5.9" height="9.6" rx="2.95"/><path d="M6.3 10.6h1.5v1.4H10v1.3H4v-1.3h2.3z"/></g><path d="M.8 13.6L13.8 .6" stroke="#2e3034" stroke-width="2.4"/><path d="M.8 13.6L13.8 .6" stroke="#e8574e" stroke-width="1.2"/></svg><div class="a t pt" style="left:955px;top:906px">Yehen Adikari</div>
<div class="a t nm" style="left:1087px;top:868.5px;width:200px;text-align:center">Nazar Chornii</div>
<div class="a pill" style="left:1105px;top:903px;width:105px;height:19px"></div><svg class="a" style="left:1108px;top:905.5px" width="14" height="14" viewBox="0 0 14 14"><g fill="#e8574e"><rect x="4.1" y="1" width="5.9" height="9.6" rx="2.95"/><path d="M6.3 10.6h1.5v1.4H10v1.3H4v-1.3h2.3z"/></g><path d="M.8 13.6L13.8 .6" stroke="#2e3034" stroke-width="2.4"/><path d="M.8 13.6L13.8 .6" stroke="#e8574e" stroke-width="1.2"/></svg><div class="a t pt" style="left:1126px;top:906px">Nazar Chornii</div>
<!-- toolbar -->
<div class="a" id="toolbar"></div>
<div class="a" style="left:0;top:983px;width:1280px;height:1px;background:#d8d8d8"></div>
<!-- tooltip -->
<div class="a" style="left:23px;top:867px;width:135px;height:48px;background:#262626;border:1px solid #333435;border-radius:0"></div>
<svg class="a" style="left:43px;top:914px" width="18" height="9" viewBox="0 0 18 9"><path d="M0 0L9 8.5 18 0z" fill="#262626"/></svg>
<div class="a t" style="left:38.5px;top:882.5px;font-size:13px;letter-spacing:0.1px;color:#f0f0f0">Click to join audio</div>
<!-- join audio -->
<svg class="a" style="left:39px;top:937px" width="26" height="20" viewBox="0 0 26 20"><path d="M3.6 12V10.5C3.6 5.3 7.8 1.3 13 1.3S22.4 5.3 22.4 10.5V12" fill="none" stroke="#fff" stroke-width="1.7"/><path d="M7 9.2v10.3H5.2C3 19.5 1 17.3 1 14.4s2-5.2 4.2-5.2z" fill="#fff"/><path d="M19 9.2v10.3h1.8c2.2 0 4.2-2.2 4.2-5.1s-2-5.2-4.2-5.2z" fill="#fff"/><path d="M13 19.5V9.5M9.3 13L13 9.2l3.7 3.8" stroke="#17d28a" stroke-width="1.9" fill="none"/></svg>
<svg class="a" style="left:80px;top:943px" width="9" height="7" viewBox="0 0 9 7"><path d="M1 5.5L4.5 2 8 5.5" stroke="#fff" stroke-width="1.4" fill="none"/></svg>
<div class="a t tbt" style="left:24px;top:965px">Join audio</div>
<!-- video -->
<svg class="a" style="left:132px;top:934px" width="26" height="25" viewBox="0 0 26 25"><rect x="1" y="5.5" width="15" height="13" rx="2" fill="none" stroke="#fff" stroke-width="1.5"/><path d="M18 10l6-4v13l-6-4" fill="none" stroke="#fff" stroke-width="1.5" stroke-linejoin="round"/><path d="M2.5 23.5L23.5 1.5" stroke="#000" stroke-width="3.5"/><path d="M2.5 23.5L23.5 1.5" stroke="#f0235f" stroke-width="2"/></svg>
<div class="a t tbt" style="left:129px;top:965px">Video</div>
<!-- participants -->
<svg class="a" style="left:506px;top:938px" width="20" height="19" viewBox="0 0 20 19"><circle cx="6" cy="4.5" r="3.2" fill="none" stroke="#fff" stroke-width="1.4"/><circle cx="13.5" cy="9" r="2.8" fill="none" stroke="#fff" stroke-width="1.4"/><path d="M1 15.5C1 12 3 10 6.2 10c1 0 1.8.2 2.4.6" fill="none" stroke="#fff" stroke-width="1.4"/><rect x="8" y="13" width="11" height="5" rx="2.5" fill="none" stroke="#fff" stroke-width="1.4"/><path d="M1 15.5v1.5h6" fill="none" stroke="#fff" stroke-width="1.4"/></svg>
<div class="a t" style="left:532px;top:939px;font-size:12px;color:#c8c8c8">38</div>
<svg class="a" style="left:565px;top:943px" width="9" height="7" viewBox="0 0 9 7"><path d="M1 5.5L4.5 2 8 5.5" stroke="#fff" stroke-width="1.4" fill="none"/></svg>
<div class="a t tbt" style="left:485px;top:965px">Participants</div>
<!-- chat -->
<svg class="a" style="left:614px;top:937px" width="24" height="22" viewBox="0 0 24 22"><path d="M3.5 2h17c1.1 0 2 .9 2 2v9c0 1.1-.9 2-2 2H9.5L4 20.5V15h-.5c-1.1 0-2-.9-2-2V4c0-1.1.9-2 2-2z" fill="none" stroke="#fff" stroke-width="1.5" stroke-linejoin="round"/></svg>
<div class="a" style="left:628px;top:931px;width:19px;height:19px;border-radius:50%;background:#e5262f;border:2px solid #fff"></div>
<div class="a t" style="left:628px;top:935px;width:19px;text-align:center;font-size:11px;font-weight:700;color:#fff">4</div>
<svg class="a" style="left:655px;top:943px" width="9" height="7" viewBox="0 0 9 7"><path d="M1 5.5L4.5 2 8 5.5" stroke="#fff" stroke-width="1.4" fill="none"/></svg>
<div class="a t tbt" style="left:614px;top:965px">Chat</div>
<!-- react -->
<svg class="a" style="left:698px;top:936px" width="26" height="22" viewBox="0 0 26 22"><path d="M9.5 20.5L2.5 13C.3 10.5.5 6 3.6 3.5 6.5 1.2 10.5 2 12.5 5.2 15 1.5 19.5 1.2 22.5 3.8c2.8 2.6 2.8 6.6.2 9.2L9.5 20.5z" fill="none" stroke="#fff" stroke-width="1.5" stroke-linejoin="round"/></svg>
<svg class="a" style="left:735px;top:943px" width="9" height="7" viewBox="0 0 9 7"><path d="M1 5.5L4.5 2 8 5.5" stroke="#fff" stroke-width="1.4" fill="none"/></svg>
<div class="a t tbt" style="left:696px;top:965px">React</div>
<!-- share -->
<svg class="a" style="left:787px;top:937px" width="26" height="20" viewBox="0 0 26 20"><rect x="1.2" y="1.2" width="23.6" height="17" rx="2" fill="none" stroke="#fff" stroke-width="1.5"/><path d="M13 14.5V5M9 9l4-4 4 4" stroke="#fff" stroke-width="1.5" fill="none"/></svg>
<svg class="a" style="left:833px;top:943px" width="9" height="7" viewBox="0 0 9 7"><path d="M1 5.5L4.5 2 8 5.5" stroke="#fff" stroke-width="1.4" fill="none"/></svg>
<div class="a t tbt" style="left:785px;top:965px">Share</div>
<!-- more -->
<svg class="a" style="left:878px;top:934px" width="26" height="26" viewBox="0 0 26 26"><circle cx="13" cy="13" r="11.8" fill="none" stroke="#fff" stroke-width="1.5"/><circle cx="7.5" cy="13" r="1.4" fill="#fff"/><circle cx="13" cy="13" r="1.4" fill="#fff"/><circle cx="18.5" cy="13" r="1.4" fill="#fff"/></svg>
<div class="a t tbt" style="left:877px;top:965px">More</div>
<!-- leave -->
<svg class="a" style="left:1219px;top:933px" width="27" height="28" viewBox="0 0 27 28"><path d="M10.5 1.9h14.2v17.6l-5.6 3.9V5.6l5.6-3.7" fill="none" stroke="#ff1a5c" stroke-width="1.6" stroke-linejoin="round"/><circle cx="10" cy="6.6" r="3.1" fill="none" stroke="#fff" stroke-width="1.4"/><path d="M8.3 10.4C6 10.6 4.3 12 2.6 14.6c-.6 1 .6 2 1.4 1.2l2.4-2.4.2 5.2-3.2 5.6c-.6 1.1.8 2.1 1.6 1.1l3.6-4.6 2.6 4.6c.6 1.1 2.2.5 1.8-.7l-1.8-5.4.2-4.2 1.6 2.4c.7 1 2 .2 1.5-.9l-1.8-3.6c-.8-1.6-2.2-2.6-4.2-2.5z" fill="none" stroke="#fff" stroke-width="1.3" stroke-linejoin="round"/></svg>
<div class="a t tbt" style="left:1218px;top:965px">Leave</div>
<!-- taskbar -->
<div class="a" id="taskbar"></div>
<svg class="a" style="left:15px;top:995px" width="18" height="18" viewBox="0 0 18 18"><path d="M1 2.2L6.8 1.5V8H1z M7.8 1.4L17 .5V8H7.8z M1 9.2h5.8v6.6L1 15z M7.8 9.2H17v8.3l-9.2-1z" fill="#fff"/></svg>
<svg class="a" style="left:60px;top:992px" width="24" height="23" viewBox="0 0 24 23"><circle cx="14" cy="9.5" r="7.6" fill="none" stroke="#fff" stroke-width="1.7"/><path d="M8.6 15L2 21.6" stroke="#fff" stroke-width="1.9" stroke-linecap="round"/></svg>
<svg class="a" style="left:111px;top:995px" width="18" height="17" viewBox="0 0 18 17"><path d="M1 1.2v2.2h11V1.2M1 15.8v-2.2h11v2.2M1.6 5.5h9.8v5.6H1.6z" fill="none" stroke="#fff" stroke-width="1.2"/><path d="M16 1v15" stroke="#fff" stroke-width="1.2"/><rect x="14.5" y="6" width="3" height="3" fill="#fff"/></svg>
<!-- edge -->
<svg class="a" style="left:158px;top:991px" width="26" height="26" viewBox="0 0 26 26"><defs><linearGradient id="eg1" x1="0" y1="0" x2="1" y2="1"><stop offset="0" stop-color="#35c1f1"/><stop offset=".5" stop-color="#1f8fdc"/><stop offset="1" stop-color="#0b4fa8"/></linearGradient><linearGradient id="eg2" x1="0" y1="0" x2="1" y2="0"><stop offset="0" stop-color="#1fa1e0"/><stop offset="1" stop-color="#6ed84e"/></linearGradient></defs><circle cx="13" cy="13" r="12.3" fill="url(#eg1)"/><path d="M2 10C4 3 10 .7 14 .7c6 0 11.3 4.6 11.3 10.5 0 4-3.2 6.6-7 6.6-2.6 0-4.3-1.2-4.3-2.3 0-.6.8-.9 1.2-1.9.5-1-.2-3.8-3.8-3.8C7 9.8 4 11 2 13.5z" fill="url(#eg2)"/><path d="M13.5 10c-4 0-6.7 3-6.5 7 .2 4 3.5 7.8 8 8.3-3.8.4-9-1.4-11.8-6.2 2-3 5.6-6.5 10.3-9.1z" fill="#0c4a9e" opacity=".85"/></svg>
<div class="a" style="left:151px;top:1022px;width:40px;height:2px;background:#a6dcf5"></div>
<!-- explorer -->
<svg class="a" style="left:208px;top:994px" width="23" height="20" viewBox="0 0 23 20"><path d="M1 1.5h7l1.5 1.7H22V18H1z" fill="#f8c44a"/><rect x="1" y="4" width="21" height="14" fill="#ffd965"/><path d="M1 1.5h7l1.5 1.7H1z" fill="#e3a21a"/><path d="M7 9.5h9v9h-2.6v-5.5H9.6v5.5H7z" fill="#3d8fd8"/></svg>
<!-- viber -->
<svg class="a" style="left:257px;top:991px" width="26" height="28" viewBox="0 0 26 28"><path d="M12 1C5.5 1 1.5 4.5 1.5 11v3c0 4 1.8 6.8 4.8 8v3.8l3.2-3.3c.8.1 1.6.1 2.5.1 6.5 0 10.5-3.5 10.5-8.6v-3C22.5 4.5 18.5 1 12 1z" fill="#7360f2" stroke="#fff" stroke-width="1"/><path d="M8 6.5c.6-.4 1.2-.3 1.6.3l1.2 1.8c.3.5.2 1-.2 1.3l-.7.5c.6 1.6 1.7 2.8 3.3 3.5l.5-.7c.3-.4.9-.5 1.3-.2l1.8 1.2c.6.4.7 1 .3 1.6-.8 1.1-2 1.5-3.2 1-3.2-1.4-5.5-3.7-6.8-6.9-.4-1.2 0-2.4.9-3.4z" fill="#fff"/><path d="M13 5.5c2.3.2 4 1.9 4.2 4.2M13 7.7c1.2.1 2 1 2.1 2.1" stroke="#fff" stroke-width=".9" fill="none"/></svg>
<div class="a" style="left:267px;top:1002px;width:16px;height:16px;border-radius:4px;background:#ef2a2a"></div>
<div class="a t" style="left:267px;top:1004px;width:16px;text-align:center;font-size:12px;color:#fff">6</div>
<div class="a" style="left:249px;top:1022px;width:40px;height:2px;background:#a6dcf5"></div>
<!-- solitaire -->
<svg class="a" style="left:305px;top:992px" width="25" height="24" viewBox="0 0 25 24"><rect x="10" y="2" width="12" height="17" rx="1" transform="rotate(8 16 10)" fill="#1e6fc8"/><rect x="7" y="3" width="12" height="17" rx="1" transform="rotate(4 13 11)" fill="#3f9be8"/><rect x="2" y="5" width="13" height="18" rx="1" transform="rotate(-8 8 14)" fill="#fafafa" stroke="#999" stroke-width=".5"/><path d="M8.5 8c2.5 2.5 4.5 3.8 4.5 6 0 1.5-1.5 2.3-3 1.5l.8 3H6.8l.8-3c-1.5.8-3 0-3-1.5 0-2.2 1.5-3.5 3.9-6z" fill="#111"/><path d="M21 1v6M18 4h6" stroke="#fff" stroke-width="1.6"/></svg>
<!-- chromes -->
<svg class="a" style="left:355px;top:992px" width="24" height="24" viewBox="0 0 24 24"><circle cx="12" cy="12" r="12" fill="#dd3b2d"/><path d="M12 12L1.6 6A12 12 0 0 0 6 22.4z" fill="#1e9a46"/><path d="M12 12H24A12 12 0 0 1 6 22.4z" fill="#fbc02d"/><path d="M12 12L1.6 6A12 12 0 0 1 12 0z" fill="#dd3b2d"/><path d="M12 7.2h10.4" stroke="none"/><circle cx="12" cy="12" r="5.4" fill="#fff"/><circle cx="12" cy="12" r="4.2" fill="#3b7ff0"/></svg><svg class="a" style="left:404px;top:992px" width="24" height="24" viewBox="0 0 24 24"><circle cx="12" cy="12" r="12" fill="#dd3b2d"/><path d="M12 12L1.6 6A12 12 0 0 0 6 22.4z" fill="#1e9a46"/><path d="M12 12H24A12 12 0 0 1 6 22.4z" fill="#fbc02d"/><path d="M12 12L1.6 6A12 12 0 0 1 12 0z" fill="#dd3b2d"/><path d="M12 7.2h10.4" stroke="none"/><circle cx="12" cy="12" r="5.4" fill="#fff"/><circle cx="12" cy="12" r="4.2" fill="#3b7ff0"/></svg><svg class="a" style="left:414px;top:1002px" width="16" height="16" viewBox="0 0 16 16"><clipPath id="av1"><circle cx="8" cy="8" r="7.5"/></clipPath><g clip-path="url(#av1)"><rect width="16" height="16" fill="#b8b8b8"/><circle cx="9" cy="6" r="4.5" fill="#1a1414"/><ellipse cx="8.6" cy="7" rx="3" ry="3.5" fill="#e8c8b8"/><ellipse cx="8" cy="16" rx="7" ry="5" fill="#e8dede"/></g></svg><svg class="a" style="left:453px;top:992px" width="24" height="24" viewBox="0 0 24 24"><circle cx="12" cy="12" r="12" fill="#dd3b2d"/><path d="M12 12L1.6 6A12 12 0 0 0 6 22.4z" fill="#1e9a46"/><path d="M12 12H24A12 12 0 0 1 6 22.4z" fill="#fbc02d"/><path d="M12 12L1.6 6A12 12 0 0 1 12 0z" fill="#dd3b2d"/><path d="M12 7.2h10.4" stroke="none"/><circle cx="12" cy="12" r="5.4" fill="#fff"/><circle cx="12" cy="12" r="4.2" fill="#3b7ff0"/></svg><svg class="a" style="left:463px;top:1002px" width="16" height="16" viewBox="0 0 16 16"><clipPath id="av2"><circle cx="8" cy="8" r="7.5"/></clipPath><g clip-path="url(#av2)"><rect width="16" height="16" fill="#c8b498"/><ellipse cx="7.5" cy="7" rx="4.8" ry="5.5" fill="#d49a70"/><ellipse cx="7" cy="16" rx="7" ry="4" fill="#2a2220"/></g></svg><svg class="a" style="left:502px;top:992px" width="24" height="24" viewBox="0 0 24 24"><circle cx="12" cy="12" r="12" fill="#dd3b2d"/><path d="M12 12L1.6 6A12 12 0 0 0 6 22.4z" fill="#1e9a46"/><path d="M12 12H24A12 12 0 0 1 6 22.4z" fill="#fbc02d"/><path d="M12 12L1.6 6A12 12 0 0 1 12 0z" fill="#dd3b2d"/><path d="M12 7.2h10.4" stroke="none"/><circle cx="12" cy="12" r="5.4" fill="#fff"/><circle cx="12" cy="12" r="4.2" fill="#3b7ff0"/></svg>
<div class="a" style="left:396px;top:1022px;width:40px;height:2px;background:#a6dcf5"></div>
<div class="a" style="left:445px;top:1022px;width:40px;height:2px;background:#a6dcf5"></div>
<div class="a" style="left:494px;top:1022px;width:40px;height:2px;background:#a6dcf5"></div>
<!-- zoom active -->
<div class="a" style="left:539px;top:984px;width:44px;height:40px;background:#186892"></div>
<div class="a" style="left:583px;top:984px;width:1px;height:40px;background:#0a4a6e"></div>
<div class="a" style="left:539px;top:1022px;width:44px;height:2px;background:#a6dcf5"></div>
<div class="a" style="left:551px;top:992px;width:24px;height:24px;border-radius:10px;background:linear-gradient(180deg,#3c8cff,#0b5cff)"></div>
<svg class="a" style="left:551px;top:992px" width="24" height="24" viewBox="0 0 24 24"><path d="M5 9.2h5l-5 5.6h5" stroke="#fff" stroke-width="1.7" fill="none" stroke-linejoin="round"/><path d="M11.5 15v-3.6c0-1.3.9-2.2 2-2.2s2 .9 2 2.2V15M15.5 11.4c0-1.3.9-2.2 2-2.2s2 .9 2 2.2V15" stroke="#fff" stroke-width="1.6" fill="none"/></svg>
<!-- paint -->
<svg class="a" style="left:602px;top:991px" width="20" height="26" viewBox="0 0 20 26"><defs><linearGradient id="pt1" x1="0" y1="0" x2="0" y2="1"><stop offset="0" stop-color="#ffc83a"/><stop offset=".35" stop-color="#f0609a"/><stop offset=".65" stop-color="#9a6ae0"/><stop offset="1" stop-color="#29b6f0"/></linearGradient></defs><path d="M10 .5C12 4 19 10 19 16.5 19 21.7 15 25 10 25S1 21.7 1 16.5C1 10 8 4 10 .5z" fill="url(#pt1)"/><path d="M3 15c4 1 10-2 15 1" stroke="#a56ae8" stroke-width="2.5" fill="none"/></svg>
<div class="a" style="left:592px;top:1022px;width:40px;height:2px;background:#a6dcf5"></div>
<!-- tray -->
<svg class="a" style="left:1035px;top:999px" width="13" height="9" viewBox="0 0 13 9"><path d="M1 8L6.5 1.5 12 8" stroke="#fff" stroke-width="1.2" fill="none"/></svg>
<svg class="a" style="left:1056px;top:996px" width="18" height="17" viewBox="0 0 18 17"><path d="M7.5 .8L14 2.8v5c0 4-2.8 6.8-6.5 8C3.8 14.6 1 11.8 1 7.8v-5z" fill="#fff" stroke="#111" stroke-width=".8"/><path d="M7.5 .8v15M1 7.8h13" stroke="#111" stroke-width=".9"/><path d="M12.3 9.5L17.3 16.5H7.3z" fill="#f7c600" stroke="#111" stroke-width=".5"/><path d="M12.3 11.5v2.5M12.3 14.8v.6" stroke="#111" stroke-width=".9"/></svg>
<svg class="a" style="left:1083px;top:995px" width="13" height="18" viewBox="0 0 13 18"><path d="M2 3.5C3 1.5 4.5 1 6.5 1M2 14.5c1 2 2.5 2.5 4.5 2.5" stroke="#fff" stroke-width="1" fill="none"/><rect x="1" y="5.5" width="7.5" height="7" rx="1.5" fill="none" stroke="#fff" stroke-width="1.1"/><path d="M8.5 8l3.5-2v6l-3.5-2" fill="none" stroke="#fff" stroke-width="1.1"/></svg>
<svg class="a" style="left:1105px;top:997px" width="17" height="15" viewBox="0 0 17 15"><rect x="4.5" y="1" width="11.5" height="8.5" fill="none" stroke="#fff" stroke-width="1.1"/><path d="M10.2 9.5v3.5M7 13.5h6.5" stroke="#fff" stroke-width="1.1"/><rect x=".8" y="3" width="4.5" height="4" fill="#003f60" stroke="#fff" stroke-width="1"/><path d="M3 7v7" stroke="#fff" stroke-width="1"/></svg>
<div class="a t" style="left:1132px;top:998px;font-size:11.5px;color:#fff">УКР</div>
<div class="a t" style="left:1179px;top:989px;font-size:12px;letter-spacing:-0.4px;color:#fff">21:35</div>
<div class="a t" style="left:1167px;top:1007px;font-size:12px;letter-spacing:-0.65px;color:#fff">16.04.2026</div>
<svg class="a" style="left:1238px;top:995px" width="26" height="26" viewBox="0 0 26 26"><path d="M1.5 1.5h17v12.5h-9l-4 4v-4h-4z" fill="#fff"/><path d="M4.5 5h11M4.5 8h11M4.5 11h8" stroke="#003f60" stroke-width="1"/></svg>
<div class="a" style="left:1246px;top:1002px;width:17px;height:17px;border-radius:50%;background:#1a6a9c;border:1.5px solid #003f60"></div>
<div class="a t" style="left:1246px;top:1005px;width:17px;text-align:center;font-size:11px;font-weight:700;color:#fff">1</div>
<div class="a" style="left:1275px;top:984px;width:1px;height:40px;background:#4a7a96"></div>
</body></html>
